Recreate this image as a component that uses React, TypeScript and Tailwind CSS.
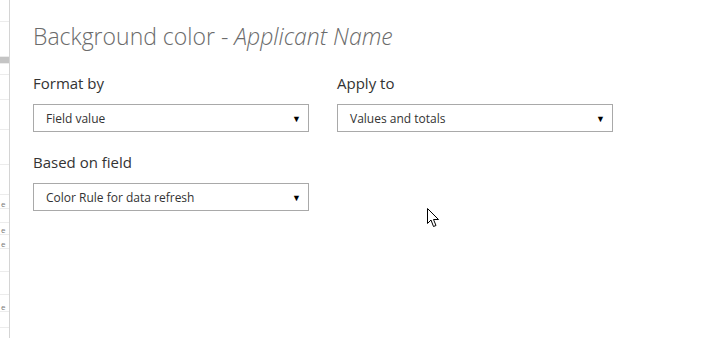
import { ReactNode } from 'react';

const font = { fontFamily: '"Open Sans", "Noto Sans", sans-serif' };

function Select({ value }: { value: string }) {
  return (
    <div className="flex h-[28px] w-[276px] items-center justify-between border border-[#a9a9a9] bg-white pl-[12px] pr-[7px]">
      <span className="mt-[2px] text-[12px] leading-none text-[#333]">{value}</span>
      <span className="mt-[1px] text-[9px] leading-none text-black">▼</span>
    </div>
  );
}

function Field({ label, children }: { label: string; children: ReactNode }) {
  return (
    <div className="flex flex-col">
      <div className="h-[20px] text-[15px] leading-[20px] text-[#333]">{label}</div>
      <div className="mt-[11px]">{children}</div>
    </div>
  );
}

// slice of the spreadsheet peeking out behind the panel
const sheetRows: { h: number; e?: boolean; band?: boolean }[] = [
  { h: 22 }, { h: 35 }, { h: 7, band: true }, { h: 11 }, { h: 25 }, { h: 30 }, { h: 35 },
  { h: 30 }, { h: 14, e: true }, { h: 14 }, { h: 12, e: true }, { h: 14, e: true },
  { h: 23 }, { h: 23 }, { h: 17, e: true }, { h: 16 }, { h: 20 },
];

export default function App() {
  return (
    <div className="relative flex h-[338px] w-[727px] overflow-hidden bg-white" style={font}>
      <div className="flex w-[10px] shrink-0 flex-col overflow-hidden border-r border-[#d4d4d4] bg-white">
        {sheetRows.map((r, i) => (
          <div
            key={i}
            className={`relative shrink-0 border-b border-[#ececec] ${r.band ? 'bg-[#c4c4c4]' : ''}`}
            style={{ height: r.h }}
          >
            {r.e && (
              <span className="absolute bottom-0 left-[1px] text-[8px] leading-none text-[#777]">e</span>
            )}
          </div>
        ))}
      </div>

      <div className="flex flex-col pl-[23px] pt-[20px]">
        <h1 className="text-[23px] font-light leading-[32px] text-[#6b6b6b]">
          Background color - <span className="italic">Applicant Name</span>
        </h1>

        <div className="mt-[21px] grid grid-cols-[276px_276px] gap-x-[28px]">
          <Field label="Format by">
            <Select value="Field value" />
          </Field>
          <Field label="Apply to">
            <Select value="Values and totals" />
          </Field>
        </div>

        <div className="mt-[20px]">
          <Field label="Based on field">
            <Select value="Color Rule for data refresh" />
          </Field>
        </div>
      </div>

      {/* mouse pointer */}
      <svg
        className="absolute left-[427px] top-[208px]"
        width="13"
        height="20"
        viewBox="0 0 13 20"
      >
        <path
          d="M0.5 0.5 L0.5 15.5 L4 12 L6.5 18.5 L9 17.5 L6.5 11.5 L11.5 11.5 Z"
          fill="white"
          stroke="black"
          strokeWidth="1"
          strokeLinejoin="miter"
        />
      </svg>
    </div>
  );
}
